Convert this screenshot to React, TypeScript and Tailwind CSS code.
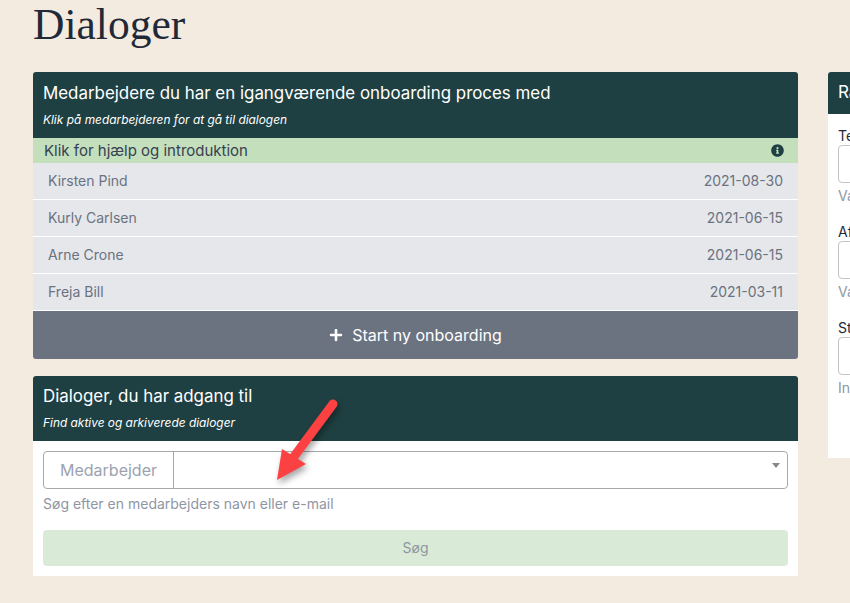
import { FaInfoCircle, FaPlus } from 'react-icons/fa'

const dialogs = [
  { name: 'Kirsten Pind', date: '2021-08-30' },
  { name: 'Kurly Carlsen', date: '2021-06-15' },
  { name: 'Arne Crone', date: '2021-06-15' },
  { name: 'Freja Bill', date: '2021-03-11' },
]

const fields = [
  { label: 'Tekst', help: 'Vælg tekst' },
  { label: 'Afdeling', help: 'Vælg afdeling' },
  { label: 'Status', help: 'Indtast status' },
]

export default function App() {
  return (
    <div className="relative h-[603px] w-[850px] overflow-hidden bg-[#f3ebe0] font-['Inter',sans-serif]">
      <h1 className="pl-[33px] font-['Liberation_Serif',serif] text-[43.5px] leading-[48px] text-[#1f2937]">Dialoger</h1>

      <div className="mt-[24px] flex w-[1100px] items-start gap-[30px] pl-[33px]">
        {/* Left column */}
        <div className="flex w-[765px] shrink-0 flex-col gap-[17px]">
          <section className="overflow-hidden rounded-[3px]">
            <div className="h-[66px] bg-[#1f4042] px-2.5 pt-[9px] text-white">
              <h2 className="text-[16.9px] leading-[24px]">Medarbejdere du har en igangværende onboarding proces med</h2>
              <p className="mt-[6px] text-[11.9px] italic leading-[18px]">Klik på medarbejderen for at gå til dialogen</p>
            </div>
            <div className="flex h-[25px] items-center justify-between bg-[#c4dfbc] pl-[11px] pr-[14px] pt-0.5 text-[15px] text-[#374151]">
              <span>Klik for hjælp og introduktion</span>
              <FaInfoCircle className="-mt-0.5 text-[13px] text-[#1f4042]" />
            </div>
            <ul>
              {dialogs.map((d) => (
                <li
                  key={d.name}
                  className="flex h-[37px] items-center justify-between border-b border-white bg-[#e5e7eb] px-[15px] text-sm text-[#6b7280]"
                >
                  <span>{d.name}</span>
                  <span>{d.date}</span>
                </li>
              ))}
            </ul>
            <button className="flex h-[48px] w-full items-center justify-center gap-[9px] bg-[#6b7280] text-base text-white">
              <FaPlus className="text-sm" />
              Start ny onboarding
            </button>
          </section>

          <section className="overflow-hidden rounded-t-[3px] bg-white">
            <div className="h-[65px] bg-[#1f4042] px-2.5 pt-2 text-white">
              <h2 className="text-[16.9px] leading-[24px]">Dialoger, du har adgang til</h2>
              <p className="mt-[6px] text-[11.9px] italic leading-[18px]">Find aktive og arkiverede dialoger</p>
            </div>
            <div className="p-2.5">
              <div className="flex h-[38px] rounded border border-[#a8a8a8] text-base text-[#9ca3af]">
                <span className="flex w-[130px] items-center justify-center border-r border-[#a8a8a8]">Medarbejder</span>
                <span className="relative flex-1">
                  <span className="absolute right-[7px] top-[11px] h-0 w-0 border-x-[4px] border-t-[5px] border-x-transparent border-t-[#888888]" />
                </span>
              </div>
              <p className="mt-[4px] text-sm leading-[21px] text-[#8f96a3]">Søg efter en medarbejders navn eller e-mail</p>
              <button className="mt-[16px] h-[36px] w-full rounded bg-[#d9ead6] text-sm text-[#8f96a3]">Søg</button>
            </div>
          </section>
        </div>

        {/* Right column, cut off by the window */}
        <section className="w-[240px] shrink-0 overflow-hidden rounded-t-[3px] bg-white">
          <div className="flex h-[42px] items-center bg-[#1f4042] px-2.5 text-[17px] text-white">Rapporter</div>
          <div className="h-[344px] px-2.5 pt-[12px]">
            {fields.map((f) => (
              <div key={f.label} className="mb-[16px]">
                <label className="block text-sm leading-[19px] text-[#1f2937]">{f.label}</label>
                <div className="h-[38px] rounded border border-[#c4c4c4] bg-white" />
                <p className="mt-[2px] text-sm leading-[21px] text-[#8f96a3]">{f.help}</p>
              </div>
            ))}
          </div>
        </section>
      </div>

      {/* Annotation arrow over the screenshot */}
      <svg className="absolute left-0 top-0 drop-shadow-[2px_4px_3px_rgba(0,0,0,0.35)]" width="850" height="603" viewBox="0 0 850 603">
        <path d="M333 404 L293 458" stroke="#fb4141" strokeWidth="9" strokeLinecap="round" fill="none" />
        <path d="M277 480 L282 449 L306 464 Z" fill="#fb4141" />
      </svg>
    </div>
  )
}
